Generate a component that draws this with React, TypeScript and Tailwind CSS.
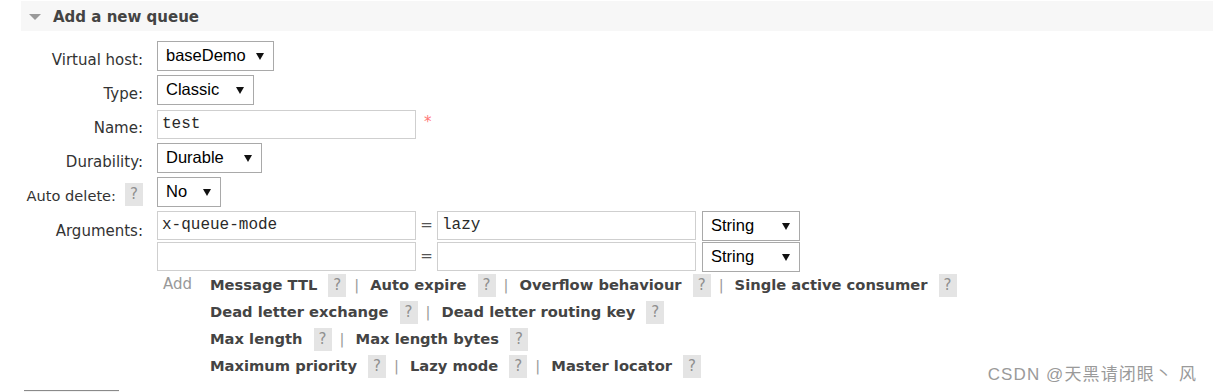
import React from 'react';

const Caret = () => (
  <svg width="8" height="7" viewBox="0 0 8 7" className="shrink-0">
    <polygon points="0,0 8,0 4,7" fill="#111" />
  </svg>
);

const Select = ({ value, w }: { value: string; w: string }) => (
  <div className={`${w} h-[30px] flex items-center justify-between border border-[#a9a9a9] bg-white pl-[8px] pr-[9px] text-[16.5px] text-black font-['Liberation_Sans',Arial,sans-serif]`}>
    <span className="leading-none -mt-[2px]">{value}</span>
    <Caret />
  </div>
);

const Input = ({ value }: { value?: string }) => (
  <div className="w-[259px] h-[29px] flex items-center border border-[#cfcfcf] bg-white pl-[4px] text-[16px] text-[#2a2a2a] font-['Liberation_Mono',monospace]">
    <span className="-mt-[2px]">{value}</span>
  </div>
);

const Help = () => (
  <span className="inline-flex w-[18px] h-[23px] items-center justify-center bg-[#e4e4e4] text-[#8f8f8f] text-[15px] font-normal">
    ?
  </span>
);

const Sep = () => <span className="ml-[8px] mr-[11px] text-[#999] font-normal">|</span>;

const Arg = ({ label, last }: { label: string; last?: boolean }) => (
  <>
    <span className="mr-[11px]">{label}</span>
    <Help />
    {!last && <Sep />}
  </>
);

const linkRows: string[][] = [
  ['Message TTL', 'Auto expire', 'Overflow behaviour', 'Single active consumer'],
  ['Dead letter exchange', 'Dead letter routing key'],
  ['Max length', 'Max length bytes'],
  ['Maximum priority', 'Lazy mode', 'Master locator'],
];

export default function App() {
  return (
    <div className="relative w-[1213px] h-[392px] overflow-hidden bg-white font-['DejaVu_Sans',Verdana,sans-serif] pl-[21px] pt-px">
      {/* section header */}
      <div className="h-[30px] bg-[#f7f7f7] flex items-center pl-[8px]">
        <svg width="12" height="6" viewBox="0 0 12 6" className="mt-[2px]">
          <polygon points="0,0 12,0 6,6" fill="#9a9a9a" />
        </svg>
        <span className="ml-[12px] mt-[3px] text-[15px] font-bold text-[#444]">Add a new queue</span>
      </div>

      <div className="grid grid-cols-[122px_1fr] gap-x-[14px] mt-[10px] text-[15px] text-[#333]">
        <div className="h-[34px] text-right pt-[10px] leading-[18px]">Virtual host:</div>
        <div className="h-[34px]"><Select value="baseDemo" w="w-[117px]" /></div>

        <div className="h-[35px] text-right pt-[10px] leading-[18px]">Type:</div>
        <div className="h-[35px]"><Select value="Classic" w="w-[97px]" /></div>

        <div className="h-[33px] text-right pt-[9px] leading-[18px]">Name:</div>
        <div className="h-[33px] flex items-start">
          <Input value="test" />
          <span className="ml-[8px] text-[#f77] text-[15px] leading-none mt-[5px]">*</span>
        </div>

        <div className="h-[34px] text-right pt-[10px] leading-[18px]">Durability:</div>
        <div className="h-[34px]"><Select value="Durable" w="w-[105px]" /></div>

        <div className="h-[34px] flex justify-end items-start pt-[6px]">
          <span className="text-[14.6px] leading-[18px] mt-[4px] mr-[9px]">Auto delete:</span>
          <Help />
        </div>
        <div className="h-[34px]"><Select value="No" w="w-[64px]" /></div>

        <div className="text-right pt-[11px] leading-[18px]">Arguments:</div>
        <div className="flex flex-col gap-[1px]">
          {[['x-queue-mode', 'lazy'], ['', '']].map(([k, v], i) => (
            <div key={i} className="flex items-start">
              <Input value={k} />
              <span className="w-[21px] text-center text-[#555] text-[15px] leading-[29px]">=</span>
              <Input value={v} />
              <div className="ml-[6px]"><Select value="String" w="w-[98px]" /></div>
            </div>
          ))}
        </div>

        <div />
        <div className="flex mt-[2px]">
          <span className="w-[53px] pl-[6px] text-[#999] text-[15px] leading-[23px] -mt-[1px]">Add</span>
          <div className="flex flex-col gap-[4px] font-bold text-[#444] text-[14.7px]">
            {linkRows.map((row, i) => (
              <div key={i} className="flex items-center h-[23px]">
                {row.map((l, j) => (
                  <Arg key={l} label={l} last={j === row.length - 1} />
                ))}
              </div>
            ))}
          </div>
        </div>
      </div>

      <div className="mt-[12px] ml-[3px] w-[95px] h-[30px] border-t border-[#8a8a8a] bg-[#f2f2f2]" />

      {/* watermark */}
      <div className="absolute right-[16px] top-[362px] text-[17px] tracking-[1.1px] text-[#9a9a9a] font-['Liberation_Sans','Noto_Sans_CJK_SC',sans-serif]">
        CSDN @天黑请闭眼丶 风
      </div>
    </div>
  );
}
